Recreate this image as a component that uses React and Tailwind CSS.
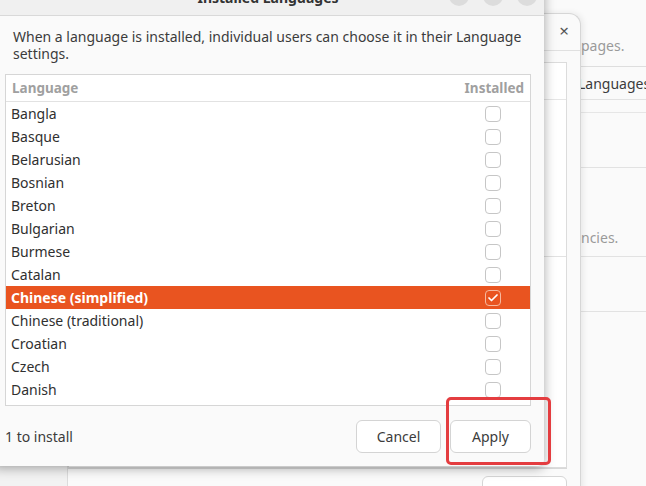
import { Check } from 'lucide-react'

const LANGUAGES = [
  { name: 'Bangla' },
  { name: 'Basque' },
  { name: 'Belarusian' },
  { name: 'Bosnian' },
  { name: 'Breton' },
  { name: 'Bulgarian' },
  { name: 'Burmese' },
  { name: 'Catalan' },
  { name: 'Chinese (simplified)', selected: true, installed: true },
  { name: 'Chinese (traditional)' },
  { name: 'Croatian' },
  { name: 'Czech' },
  { name: 'Danish' },
  { name: 'Dutch' },
]

const FONT = "font-['Noto_Sans','DejaVu_Sans',sans-serif]"

function Checkbox({ checked }) {
  if (checked) {
    return (
      <span className="flex h-4 w-4 items-center justify-center rounded-[4px] border border-[#f6b89e] bg-[#e95420]">
        <Check className="h-3 w-3 text-white" strokeWidth={3.5} />
      </span>
    )
  }
  return <span className="h-4 w-4 rounded-[4px] border border-[#c6c6c6] bg-white" />
}

function LanguageRow({ lang }) {
  return (
    <div
      className={
        lang.selected
          ? 'flex h-[23px] shrink-0 items-center justify-between bg-[#e95420] pl-[5px] pr-[29px] font-bold text-white'
          : 'flex h-[23px] shrink-0 items-center justify-between pl-[5px] pr-[29px] text-[#303030]'
      }
    >
      <span>{lang.name}</span>
      <Checkbox checked={lang.installed} />
    </div>
  )
}

// settings window furthest back, only its right strip shows
function SettingsWindow() {
  return (
    <div className="absolute inset-0 flex bg-[#fafafa]">
      <div className="ml-[581px] flex flex-1 flex-col text-[14px]">
        <div className="flex h-[67px] items-start border-b border-[#dedede] pt-[35px] text-[#9a9a9a]">pages.</div>
        <div className="-ml-[3px] flex h-[33px] items-center border-b border-[#e2e2e2] text-[#3c3c3c]">Languages</div>
        <div className="h-[13px] border-b border-[#e6e6e6]" />
        <div className="h-[55px] border-b border-[#e2e2e2]" />
        <div className="flex h-[89px] items-end border-b border-[#e2e2e2] pb-[8px] text-[#9a9a9a]">ncies.</div>
        <div className="h-[55px] border-b border-[#e2e2e2]" />
      </div>
    </div>
  )
}

// language support window, mostly hidden by the dialog
function LanguageSupportWindow() {
  return (
    <div className="absolute left-[-20px] top-[13px] flex h-[500px] w-[601px] flex-col rounded-tr-[12px] border-r border-t border-[#d6d6d6] bg-[#fafafa] shadow-[2px_0_6px_rgba(0,0,0,0.08)]">
      <div className="flex h-[37px] shrink-0 items-start justify-end border-b border-[#e0e0e0] pr-[11px] pt-[8px] text-[17px] leading-none text-[#555]">
        ×
      </div>
      <div className="flex flex-1">
        <div className="flex w-[88px] shrink-0 flex-col justify-end border-r border-[#dcdcdc] bg-[#f2f2f2]">
          <div className="h-[26px] bg-[#e95420]" />
        </div>
        <div className="flex flex-1 flex-col pr-[13px] pt-[11px]">
          <div className="flex h-[406px] flex-col border border-[#dcdcdc] bg-white">
            <div className="h-[37px] border-b border-[#e6e6e6]" />
            <div className="h-[157px] border-b border-[#e2e2e2]" />
          </div>
          <div className="mt-[0px] flex flex-1 flex-col items-end border-t border-[#d8d8d8] pt-[7px]">
            <div className="h-[34px] w-[85px] rounded-[6px] border border-[#d6d6d6] bg-white" />
          </div>
        </div>
      </div>
    </div>
  )
}

export default function App() {
  return (
    <div className={`relative h-[486px] w-[646px] overflow-hidden bg-[#fafafa] ${FONT}`}>
      <SettingsWindow />
      <LanguageSupportWindow />

      {/* Installed Languages dialog */}
      <div className="absolute left-[-8px] top-[-22px] flex h-[488px] w-[552px] flex-col rounded-b-[6px] bg-[#fafafa] shadow-[0_2px_12px_rgba(0,0,0,0.35)]">
        <div className="relative flex h-[38px] shrink-0 items-center justify-center border-b border-[#d9d9d9] bg-[#f0f0f0]">
          <span className="mt-[2px] text-[14px] font-bold text-[#333]">Installed Languages</span>
          <div className="absolute right-[7px] top-[8px] flex gap-[14px]">
            <span className="h-[20px] w-[20px] rounded-full bg-[#dcdcdc]" />
            <span className="flex h-[20px] w-[20px] items-end justify-center rounded-full bg-[#dcdcdc] pb-[6px]">
              <span className="h-[1.5px] w-[8px] bg-[#444]" />
            </span>
            <span className="flex h-[20px] w-[20px] items-center justify-center rounded-full bg-[#dcdcdc] text-[14px] leading-none text-[#444]">×</span>
          </div>
        </div>

        <div className="flex flex-1 flex-col px-[13px] pb-[13px]">
          <p className="ml-[8px] mt-[12px] text-[14px] leading-[17px] text-[#3c3c3c]">
            When a language is installed, individual users can choose it in their Language settings.
          </p>

          <div className="mt-[12px] flex h-[332px] flex-col overflow-hidden border border-[#d6d6d6] bg-white text-[14px]">
            <div className="flex h-[27px] shrink-0 items-center justify-between border-b border-[#e2e2e2] px-[6px] text-[13.5px] font-bold text-[#a0a0a0]">
              <span>Language</span>
              <span>Installed</span>
            </div>
            {LANGUAGES.map((lang) => (
              <LanguageRow key={lang.name} lang={lang} />
            ))}
          </div>

          <div className="mt-auto flex items-center justify-between">
            <span className="text-[14px] text-[#3c3c3c]">1 to install</span>
            <div className="flex gap-[9px]">
              <button className="h-[33px] w-[85px] rounded-[6px] border border-[#d4d4d4] bg-white text-[14px] text-[#3c3c3c]">
                Cancel
              </button>
              <button className="h-[33px] w-[81px] rounded-[6px] border border-[#d4d4d4] bg-white text-[14px] text-[#3c3c3c]">
                Apply
              </button>
            </div>
          </div>
        </div>
      </div>

      {/* annotation around Apply */}
      <div className="pointer-events-none absolute left-[446px] top-[397px] h-[68px] w-[105px] rounded-[5px] border-[3px] border-[#e43d40]" />
    </div>
  )
}
